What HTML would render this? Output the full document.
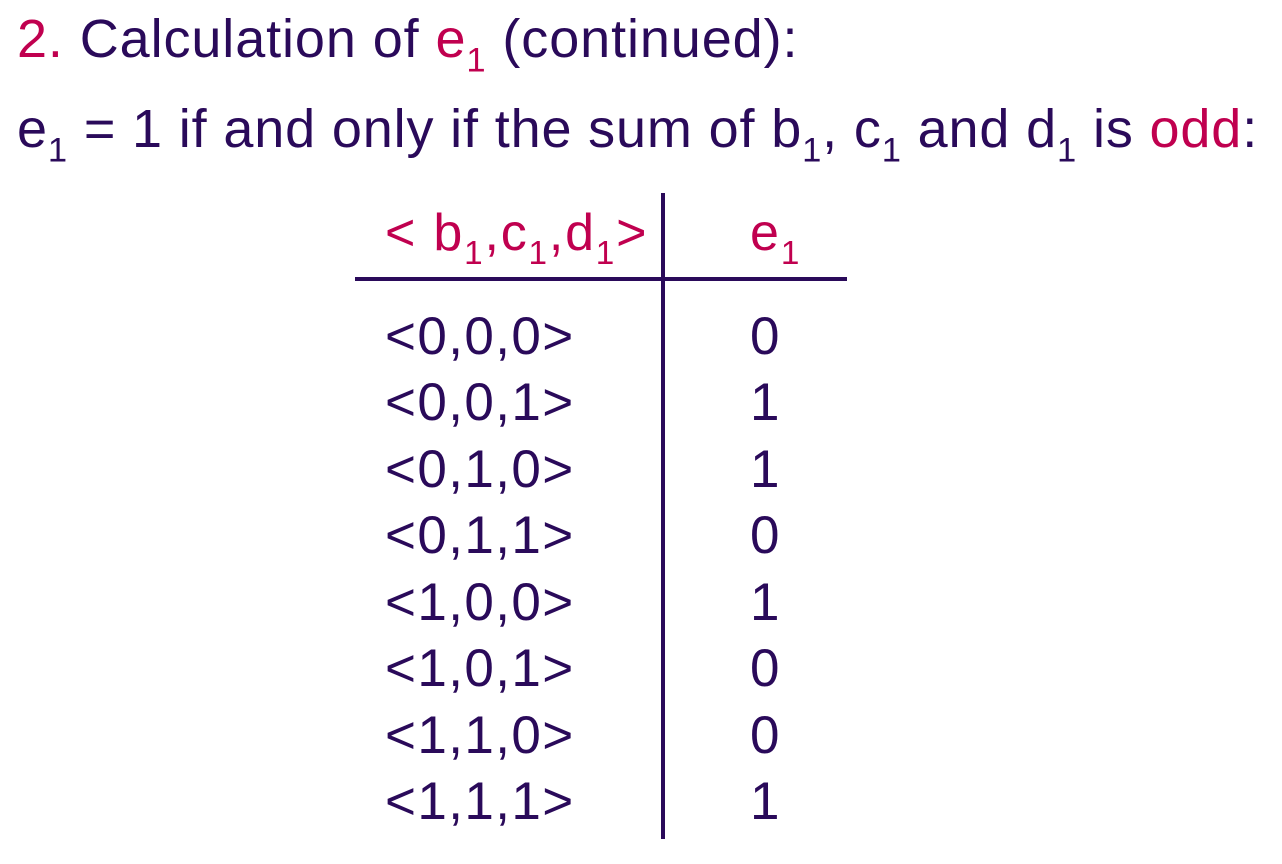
<!DOCTYPE html>
<html><head><meta charset="utf-8"><style>
body{margin:0;width:1282px;height:864px;background:#fff;position:relative;overflow:hidden;font-family:"Liberation Sans",Arial,sans-serif;color:#2a0a5a}
.t{position:absolute;white-space:nowrap;line-height:1}
.r{color:#c0004f}
sub{font-size:0.64em;vertical-align:-0.42em;line-height:0}
.row{font-size:53px;letter-spacing:1.4px}
</style></head><body>
<div class="t" style="left:17px;top:12px;font-size:54px;letter-spacing:0.9px"><span class="r">2.</span> Calculation of <span class="r">e<sub>1</sub></span> (continued):</div>
<div class="t" style="left:17px;top:102px;font-size:54px;letter-spacing:0.85px">e<sub>1</sub> = 1 if and only if the sum of b<sub>1</sub>, c<sub>1</sub> and d<sub>1</sub> is <span class="r">odd</span>:</div>
<div style="position:absolute;left:661px;top:193px;width:4px;height:646px;background:#2a0a5a"></div>
<div style="position:absolute;left:355px;top:277px;width:492px;height:4px;background:#2a0a5a"></div>
<div class="t r" style="left:385px;top:207px;font-size:52px;letter-spacing:1.8px">&lt; b<sub>1</sub>,c<sub>1</sub>,d<sub>1</sub>&gt;</div>
<div class="t r" style="left:750px;top:207px;font-size:52px;letter-spacing:2px">e<sub>1</sub></div>
<div class="t row" style="left:385px;top:310px">&lt;0,0,0&gt;</div><div class="t row" style="left:750px;top:310px">0</div>
<div class="t row" style="left:385px;top:376px">&lt;0,0,1&gt;</div><div class="t row" style="left:750px;top:376px">1</div>
<div class="t row" style="left:385px;top:443px">&lt;0,1,0&gt;</div><div class="t row" style="left:750px;top:443px">1</div>
<div class="t row" style="left:385px;top:509px">&lt;0,1,1&gt;</div><div class="t row" style="left:750px;top:509px">0</div>
<div class="t row" style="left:385px;top:576px">&lt;1,0,0&gt;</div><div class="t row" style="left:750px;top:576px">1</div>
<div class="t row" style="left:385px;top:642px">&lt;1,0,1&gt;</div><div class="t row" style="left:750px;top:642px">0</div>
<div class="t row" style="left:385px;top:709px">&lt;1,1,0&gt;</div><div class="t row" style="left:750px;top:709px">0</div>
<div class="t row" style="left:385px;top:775px">&lt;1,1,1&gt;</div><div class="t row" style="left:750px;top:775px">1</div>
</body></html>
